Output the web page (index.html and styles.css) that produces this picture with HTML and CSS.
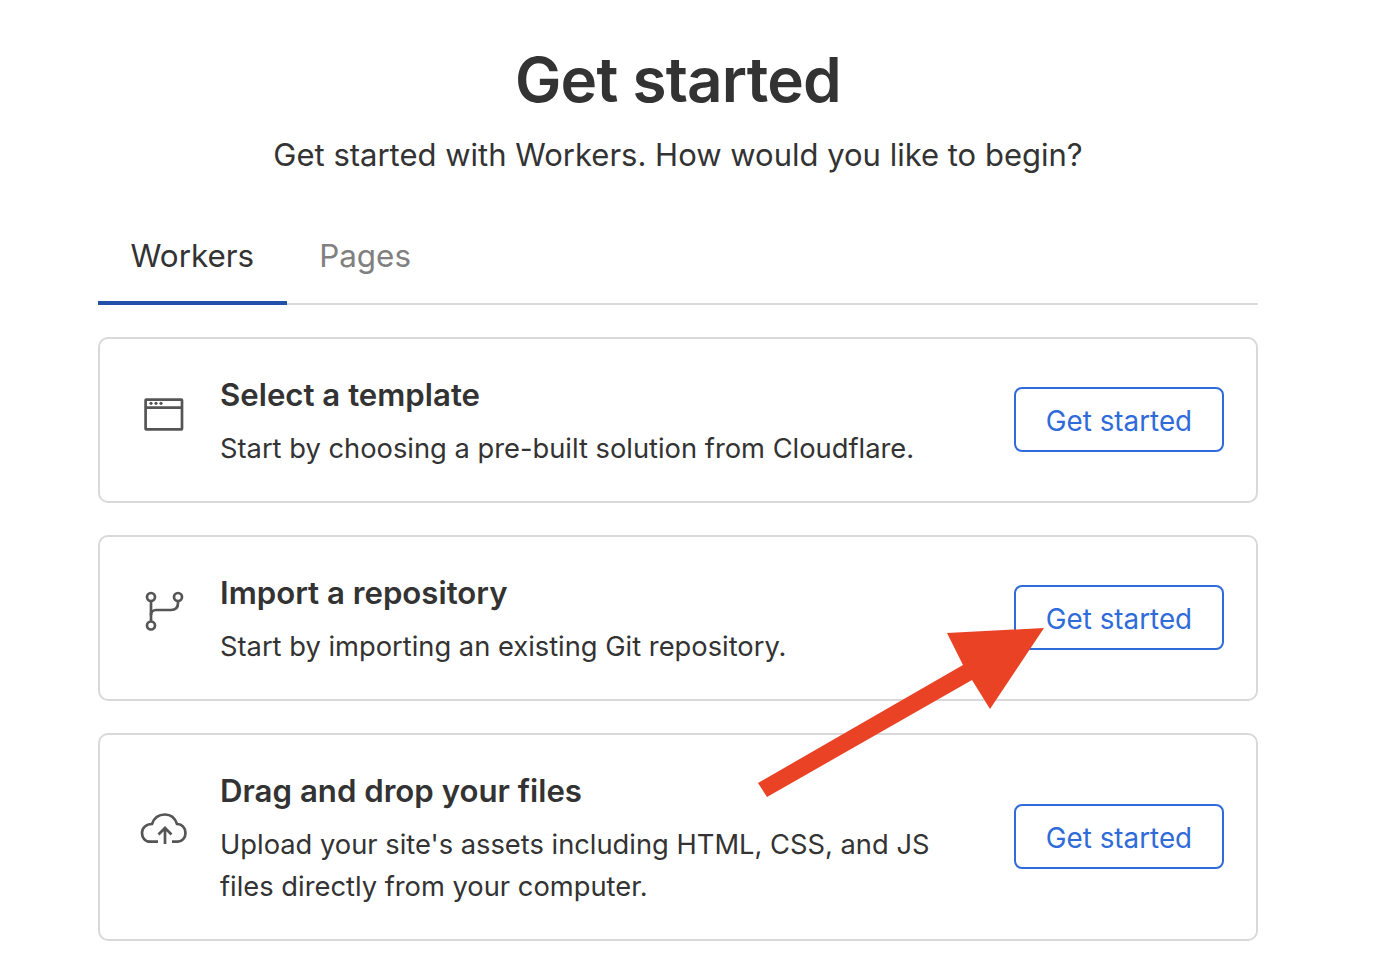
FILE: index.html
```html
<!DOCTYPE html>
<html lang="en">
<head>
    <meta charset="UTF-8">
    <meta name="viewport" content="width=device-width, initial-scale=1.0">
    <title>Get started</title>
    <link rel="stylesheet" href="styles.css">
</head>
<body>
    <div class="container">
        <h1 class="page-title">Get started</h1>
        <p class="page-subtitle">Get started with Workers. How would you like to begin?</p>

        <div class="tabs">
            <div class="tab tab-active">Workers</div>
            <div class="tab">Pages</div>
        </div>

        <div class="card">
            <div class="card-icon">
                <svg width="48" height="48" viewBox="0 0 48 48" fill="none" stroke="#555" stroke-width="2.7">
                    <rect x="5.6" y="9.6" width="36.4" height="29.8" rx="0.6"/>
                    <path d="M5 17.700h38"/>
                    <circle cx="11" cy="13.300" r="1.600" fill="#555" stroke="none"/>
                    <circle cx="16" cy="13.300" r="1.600" fill="#555" stroke="none"/>
                    <circle cx="21" cy="13.300" r="1.600" fill="#555" stroke="none"/>
                </svg>
            </div>
            <div class="card-body">
                <h2 class="card-title">Select a template</h2>
                <p class="card-text">Start by choosing a pre-built solution from Cloudflare.</p>
            </div>
            <button class="btn">Get started</button>
        </div>

        <div class="card">
            <div class="card-icon">
                <svg width="48" height="48" viewBox="0 0 48 48" fill="none" stroke="#555" stroke-width="2.7">
                    <circle cx="11" cy="9" r="4"/>
                    <circle cx="11" cy="37.500" r="4"/>
                    <circle cx="38" cy="9" r="4"/>
                    <path d="M11 13v20.500"/>
                    <path d="M38 13v2c0 5-3 7-7 7H16c-3 0-5 2-5 5"/>
                </svg>
            </div>
            <div class="card-body">
                <h2 class="card-title">Import a repository</h2>
                <p class="card-text">Start by importing an existing Git repository.</p>
            </div>
            <button class="btn">Get started</button>
        </div>

        <div class="card card-tall">
            <div class="card-icon">
                <svg width="48" height="48" viewBox="0 0 48 48" fill="none" stroke="#555" stroke-width="2.7">
                    <path d="M18 34.700H10C5 34.700 2 30.500 2 26C2 21 6 17 12 17C14 11 19 7.500 25 7.500C31 7.500 35 11 37 17C42 17 45.500 21 45.500 26C45.500 31 42 34.700 38 34.700H32"/>
                    <path d="M25 37V21M18.500 27.500L25 21L31.500 27.500"/>
                </svg>
            </div>
            <div class="card-body">
                <h2 class="card-title">Drag and drop your files</h2>
                <p class="card-text">Upload your site's assets including HTML, CSS, and JS files directly from your computer.</p>
            </div>
            <button class="btn">Get started</button>
        </div>
    </div>

    <!-- annotation drawn on top of the screenshot -->
    <svg class="arrow" width="1396" height="964" viewBox="0 0 1396 964">
        <polygon fill="#e94225" points="1044,628 947,633 963,665 758,783 767,797 972,680 990,709"/>
    </svg>
</body>
</html>
```

FILE: styles.css
```css
html, body {
    height: 100%;
}
body {
    font-family: Inter, "Liberation Sans", sans-serif;
    background-color: #ffffff;
    color: #333;
    margin: 0;
    overflow: hidden;
}
.container {
    width: 1160px;
    margin-left: 98px;
    padding-top: 41px;
}
.page-title {
    margin: 0;
    font-size: 62px;
    line-height: 78px;
    font-weight: 600;
    letter-spacing: -0.8px;
    text-align: center;
    color: #333;
}
.page-subtitle {
    margin: 15px 0 0;
    font-size: 31px;
    line-height: 42px;
    text-align: center;
    color: #333;
}
.tabs {
    display: flex;
    margin-top: 40px;
    margin-bottom: 32px;
    border-bottom: 2px solid #d9d9d9;
}
.tab {
    padding: 20px 32.5px 25px;
    font-size: 31.4px;
    line-height: 40px;
    color: #808080;
    margin-bottom: -2px;
}
.tab-active {
    color: #333;
    border-bottom: 4px solid #2151a8;
}
.card {
    display: flex;
    align-items: center;
    box-sizing: border-box;
    height: 166px;
    margin-bottom: 32px;
    padding: 0 32px 0 40px;
    border: 2px solid #d9d9d9;
    border-radius: 10px;
}
.card-tall {
    height: 208px;
}
.card-icon {
    width: 48px;
    height: 48px;
    margin-right: 32px;
    margin-bottom: 12px;
}
.card-body {
    flex: 1;
    padding-top: 5px;
    padding-right: 60px;
}
.card-title {
    margin: 0;
    font-size: 31.2px;
    line-height: 40px;
    font-weight: 600;
    color: #333;
}
.card-text {
    margin: 13px 0 0;
    font-size: 27.3px;
    line-height: 42px;
    color: #333;
}
.btn {
    width: 210px;
    height: 65px;
    flex-shrink: 0;
    margin-bottom: 1px;
    padding: 3px 0 0;
    background-color: #ffffff;
    border: 2px solid #2f6bd9;
    border-radius: 8px;
    color: #2f6bd9;
    font-family: inherit;
    font-size: 27.8px;
}
.arrow {
    position: absolute;
    left: 0;
    top: 0;
    pointer-events: none;
}
```
